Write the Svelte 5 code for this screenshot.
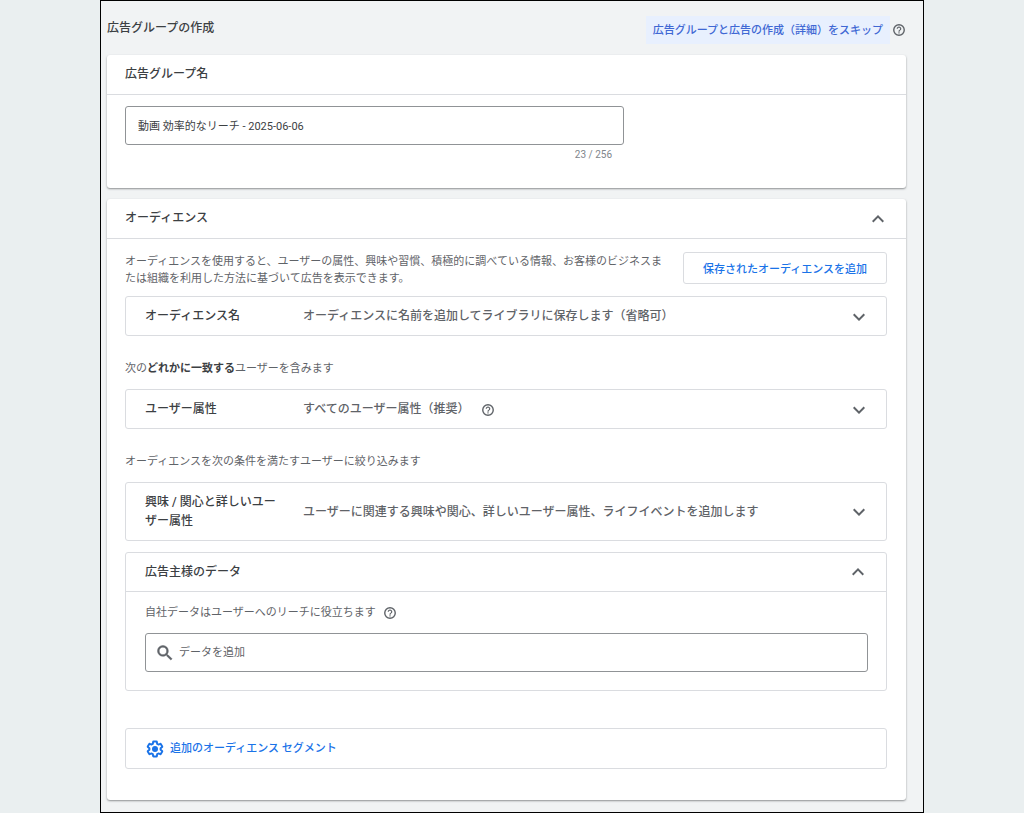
<script>
    let groupName = '動画 効率的なリーチ - 2025-06-06'
    let query = ''
    const maxLength = 256
</script>

{#snippet help()}
    <button class="icon-button help" type="button" aria-label="ヘルプ">
        <svg viewBox="0 0 24 24" width="14" height="14" aria-hidden="true">
            <circle cx="12" cy="12" r="9" fill="none" stroke="currentColor" stroke-width="2.4" />
            <path fill="currentColor" d="M11 16h2v2h-2zM12 6c-2.21 0-4 1.79-4 4h2c0-1.1.9-2 2-2s2 .9 2 2c0 2-3 1.75-3 5h2c0-2.25 3-2.5 3-5 0-2.21-1.79-4-4-4z" />
        </svg>
    </button>
{/snippet}

{#snippet chevron(open, label)}
    <button class="icon-button" type="button" aria-label={label} aria-expanded={open}>
        <svg viewBox="0 0 24 24" width="24" height="24" aria-hidden="true">
            {#if open}
                <path fill="currentColor" d="M7.41 15.41L12 10.83l4.59 4.58L18 14l-6-6-6 6z" />
            {:else}
                <path fill="currentColor" d="M7.41 8.59L12 13.17l4.59-4.58L18 10l-6 6-6-6z" />
            {/if}
        </svg>
    </button>
{/snippet}

<main class="frame">
    <header class="page-header">
        <h1>広告グループの作成</h1>
        <div class="skip-wrapper">
            <button class="skip" type="button">広告グループと広告の作成（詳細）をスキップ</button>
            {@render help()}
        </div>
    </header>

    <section class="card">
        <div class="card-header">
            <h2><label for="group-name">広告グループ名</label></h2>
        </div>
        <div class="name-body">
            <div class="name-field">
                <input id="group-name" class="text-box" type="text" maxlength={maxLength} bind:value={groupName}>
                <p class="counter">{groupName.length} / {maxLength}</p>
            </div>
        </div>
    </section>

    <section class="card">
        <div class="card-header">
            <h2>オーディエンス</h2>
            {@render chevron(true, 'オーディエンス')}
        </div>
        <div class="audience-body">
            <div class="intro">
                <p>オーディエンスを使用すると、ユーザーの属性、興味や習慣、積極的に調べている情報、お客様のビジネスまたは組織を利用した方法に基づいて広告を表示できます。</p>
                <button class="outlined" type="button">保存されたオーディエンスを追加</button>
            </div>

            <div class="row">
                <h3>オーディエンス名</h3>
                <p>オーディエンスに名前を追加してライブラリに保存します（省略可）</p>
                {@render chevron(false, 'オーディエンス名')}
            </div>

            <p class="note">次の<b>どれかに一致する</b>ユーザーを含みます</p>

            <div class="row">
                <h3>ユーザー属性</h3>
                <p>すべてのユーザー属性（推奨）{@render help()}</p>
                {@render chevron(false, 'ユーザー属性')}
            </div>

            <p class="note">オーディエンスを次の条件を満たすユーザーに絞り込みます</p>

            <div class="row">
                <h3>興味 / 関心と詳しいユーザー属性</h3>
                <p>ユーザーに関連する興味や関心、詳しいユーザー属性、ライフイベントを追加します</p>
                {@render chevron(false, '興味 / 関心と詳しいユーザー属性')}
            </div>

            <div class="panel">
                <div class="panel-header">
                    <h3>広告主様のデータ</h3>
                    {@render chevron(true, '広告主様のデータ')}
                </div>
                <div class="panel-body">
                    <p class="hint"><label for="data-search">自社データはユーザーへのリーチに役立ちます</label>{@render help()}</p>
                    <div class="search">
                        <svg viewBox="0 0 24 24" width="20" height="20" aria-hidden="true">
                            <path fill="currentColor" stroke="currentColor" stroke-width="0.6" d="M15.5 14h-.79l-.28-.27A6.47 6.47 0 0 0 16 9.5 6.5 6.5 0 1 0 9.5 16c1.61 0 3.09-.59 4.23-1.57l.27.28v.79l5 4.99L20.49 19l-4.99-5zm-6 0C7.01 14 5 11.99 5 9.5S7.01 5 9.5 5 14 7.01 14 9.5 11.99 14 9.5 14z" />
                        </svg>
                        <input id="data-search" type="text" placeholder="データを追加" bind:value={query}>
                    </div>
                </div>
            </div>

            <button class="segments" type="button">
                <svg viewBox="0 0 24 24" width="18" height="18" aria-hidden="true">
                    <path fill="none" stroke="currentColor" stroke-width="2.6" stroke-linejoin="round" d="M19.43 12.98c.04-.32.07-.64.07-.98 0-.34-.03-.66-.07-.98l2.11-1.65c.19-.15.24-.42.12-.64l-2-3.46c-.09-.16-.26-.25-.44-.25-.06 0-.12.01-.17.03l-2.49 1c-.52-.4-1.08-.73-1.69-.98l-.38-2.65C14.46 2.18 14.25 2 14 2h-4c-.25 0-.46.18-.49.42l-.38 2.65c-.61.25-1.17.59-1.69.98l-2.49-1c-.06-.02-.12-.03-.18-.03-.17 0-.34.09-.43.25l-2 3.46c-.13.22-.07.49.12.64l2.11 1.65c-.04.32-.07.65-.07.98 0 .33.03.66.07.98l-2.11 1.65c-.19.15-.24.42-.12.64l2 3.46c.09.16.26.25.44.25.06 0 .12-.01.17-.03l2.49-1c.52.4 1.08.73 1.69.98l.38 2.65c.03.24.24.42.49.42h4c.25 0 .46-.18.49-.42l.38-2.65c.61-.25 1.17-.59 1.69-.98l2.49 1c.06.02.12.03.18.03.17 0 .34-.09.43-.25l2-3.46c.12-.22.07-.49-.12-.64z" />
                    <circle cx="12" cy="12" r="4" fill="currentColor" />
                </svg>
                追加のオーディエンス セグメント
            </button>
        </div>
    </section>
</main>

<style>
    :global(body) {
        background: #eaeff0;
    }

    .frame {
        box-sizing: border-box;
        margin: 0 100px;
        padding: 0 17px 12px 6px;
        border: 1px solid #000;
        background: #f1f3f4;
        color: #3c4043;
        font-family: Roboto, "Noto Sans CJK JP", sans-serif;
        font-size: 11px;
        line-height: 16px;
    }

    h1, h2, h3, p {
        margin: 0;
    }
    h1, h2, h3 {
        font-size: 12px;
        font-weight: 500;
        line-height: 19px;
    }
    button, input {
        font: inherit;
    }
    button {
        cursor: pointer;
    }

    .icon-button {
        display: flex;
        flex: none;
        padding: 0;
        border: 0;
        background: none;
        color: #5f6368;
    }

    /* HEADER */
    .page-header {
        display: flex;
        justify-content: space-between;
        align-items: center;
        height: 54px;
    }
    .skip-wrapper {
        display: flex;
        align-items: center;
        gap: 2px;
        padding-top: 3px;
    }
    .skip {
        padding: 7px 7px 5px;
        border: 0;
        background: #e8f0fe;
        color: #3f68d4;
        font-weight: 500;
    }

    /* CARDS */
    .card {
        border-radius: 3px;
        background: #fff;
        box-shadow: 0 1px 2px rgba(60, 64, 67, 0.55);
    }
    .card + .card {
        margin-top: 11px;
    }
    .card-header {
        display: flex;
        justify-content: space-between;
        align-items: center;
        box-sizing: border-box;
        height: 40px;
        padding: 0 16px 0 18px;
        border-bottom: 1px solid #dadce0;
    }
    .name-body {
        padding: 11px 18px 25px;
    }
    .name-field {
        max-width: 499px;
    }
    .text-box {
        box-sizing: border-box;
        width: 100%;
        height: 39px;
        padding: 0 12px 2px;
        border: 1px solid #909396;
        border-radius: 3px;
        background: #fff;
        color: #3c4043;
    }
    .counter {
        margin-top: 2px;
        padding-right: 12px;
        color: #80868b;
        font-size: 10px;
        text-align: right;
    }

    /* AUDIENCE */
    .audience-body {
        padding: 13px 19px 31px 18px;
    }
    .intro {
        display: flex;
        align-items: flex-start;
        gap: 12px;
        margin-bottom: 12px;
        color: #5f6368;
    }
    .intro p {
        flex: 1;
        margin: 1px 0 -3px;
        line-height: 17px;
    }
    .outlined {
        flex: none;
        width: 204px;
        height: 32px;
        padding: 3px 6px 0;
        border: 1px solid #dadce0;
        border-radius: 3px;
        background: #fff;
        color: #1a73e8;
        font-weight: 500;
    }
    .row {
        display: flex;
        align-items: center;
        padding: 10px 15px 9px 19px;
        border: 1px solid #dadce0;
        border-radius: 3px;
    }
    .row h3 {
        flex: none;
        width: 140px;
        margin-right: 18px;
    }
    .row p {
        display: flex;
        flex: 1;
        align-items: center;
        gap: 12px;
        color: #5f6368;
        font-size: 12px;
        font-weight: 500;
        line-height: 19px;
    }
    .row .icon-button:not(.help) {
        margin: -3px 0;
    }
    .note {
        margin: 25px 0 12px;
        color: #5f6368;
    }
    .note b {
        color: #3c4043;
    }

    .panel {
        margin-top: 11px;
        border: 1px solid #dadce0;
        border-radius: 3px;
    }
    .panel-header {
        display: flex;
        justify-content: space-between;
        align-items: center;
        height: 38px;
        padding: 0 16px 0 19px;
        border-bottom: 1px solid #dadce0;
    }
    .panel-body {
        padding: 13px 18px 18px 19px;
    }
    .hint {
        display: flex;
        align-items: center;
        gap: 7px;
        color: #5f6368;
    }
    .search {
        display: flex;
        align-items: center;
        gap: 4px;
        box-sizing: border-box;
        height: 39px;
        margin-top: 12px;
        padding: 0 9px;
        border: 1px solid #909396;
        border-radius: 3px;
        color: #5f6368;
    }
    .search input {
        flex: 1;
        padding: 0;
        border: 0;
        outline: none;
        background: none;
        color: #3c4043;
    }
    .search input::placeholder {
        color: #5f6368;
        opacity: 1;
    }

    .segments {
        display: flex;
        align-items: center;
        gap: 6px;
        width: 100%;
        height: 41px;
        margin-top: 37px;
        padding: 0 20px;
        border: 1px solid #dadce0;
        border-radius: 3px;
        background: #fff;
        color: #1a73e8;
        font-weight: 500;
    }
</style>
